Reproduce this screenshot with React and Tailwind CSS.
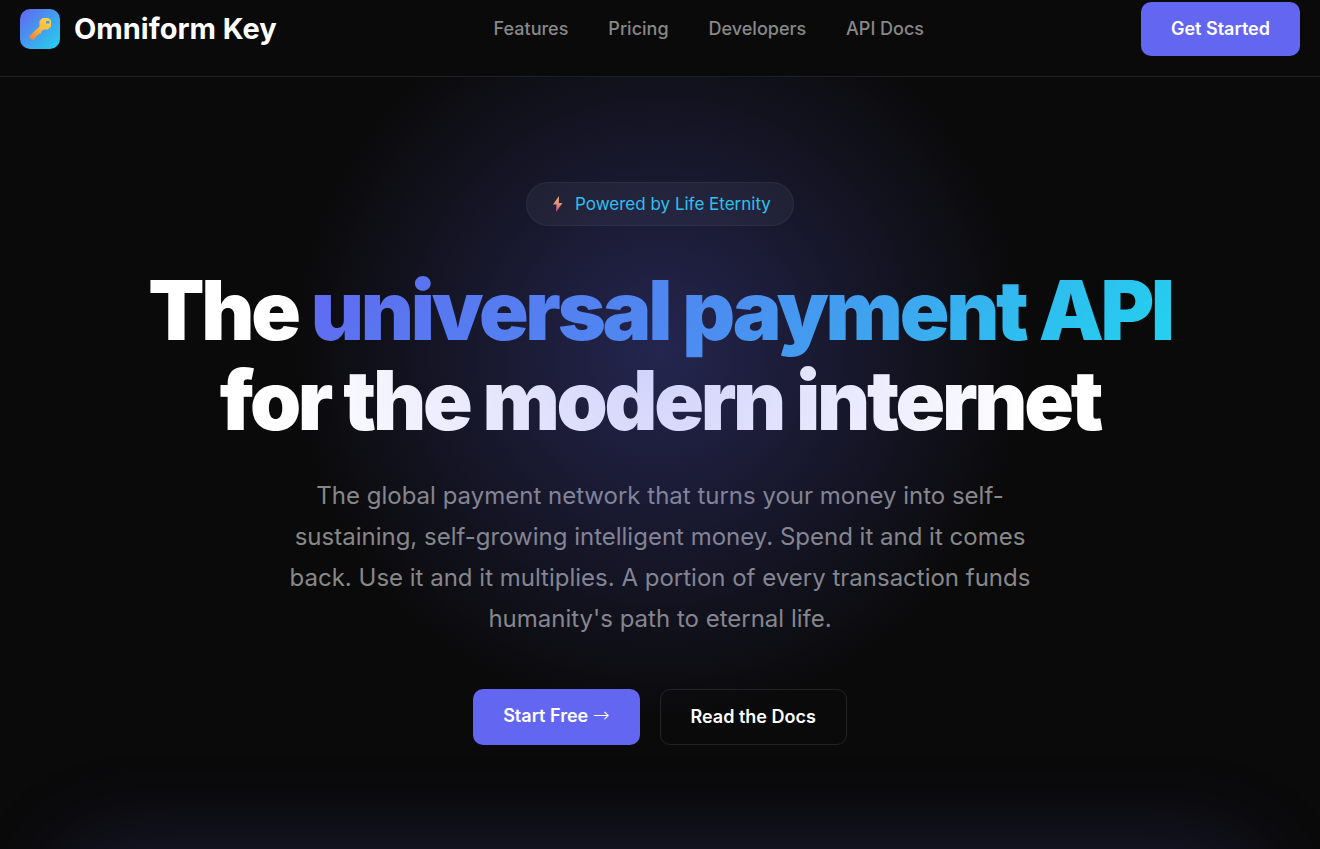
import React from 'react';

const navLinks = [
  { label: 'Features', href: '#features' },
  { label: 'Pricing', href: '#pricing' },
  { label: 'Developers', href: '#developers' },
  { label: 'API Docs', href: '#docs' }
];

const KeyIcon = () => (
  <svg viewBox="0 0 40 40" className="w-10 h-10" aria-hidden="true">
    <defs>
      <linearGradient id="key-gold" x1="31" y1="9" x2="10" y2="31" gradientUnits="userSpaceOnUse">
        <stop offset="0" stopColor="#ffd54a" />
        <stop offset="0.5" stopColor="#fdb941" />
        <stop offset="1" stopColor="#f47b3a" />
      </linearGradient>
    </defs>
    <path
      fill="url(#key-gold)"
      fillRule="evenodd"
      d="M22.500 9h6L31 11.500v6L28 20.500h-4.500L21 23v1.500h-1.500L18 26l-1.500 1L14 30.500h-3L9.500 29v-2L19.500 17.500v-5.500zM26 12v2.500h3.500V12z"
    />
  </svg>
);

const BoltIcon = () => (
  <svg viewBox="0 0 10 16" className="w-2.5 h-4" aria-hidden="true">
    <defs>
      <linearGradient id="bolt-fire" x1="0" y1="0" x2="0" y2="1">
        <stop offset="0" stopColor="#ffc56a" />
        <stop offset="0.5" stopColor="#f79a60" />
        <stop offset="1" stopColor="#e8406a" />
      </linearGradient>
    </defs>
    <path fill="url(#bolt-fire)" d="M6 0 0 8.500h3.500L3 16l6.500-9H5.800z" />
  </svg>
);

const Navbar = () => (
  <header className="relative z-20 flex items-center justify-between px-5 pt-0.5 pb-5 bg-[#0a0a0a] border-b border-[#222222]">
    <a href="#home" className="flex items-center gap-3.5 text-[29px] leading-10 font-bold">
      <span className="rounded-[10px] bg-[linear-gradient(135deg,#6366f1,#22d3ee)]">
        <KeyIcon />
      </span>
      Omniform Key
    </a>
    <nav className="flex gap-10 text-[18px] leading-[22px] font-medium text-[#888888]">
      {navLinks.map((link) => (
        <a key={link.label} href={link.href} className="hover:text-white transition-colors">{link.label}</a>
      ))}
    </nav>
    <button className="px-[30px] py-4 rounded-[10px] bg-[#6366f1] text-[18px] leading-[22px] font-semibold">
      Get Started
    </button>
  </header>
);

const Hero = () => (
  <main className="relative flex flex-col items-center px-5 pt-[105px] text-center">
    <p className="flex items-center gap-3 h-11 px-[22px] pl-[26px] rounded-full bg-white/5 border border-white/5 text-[17px] leading-5 text-[#22d3ee]">
      <BoltIcon />
      Powered by Life Eternity
    </p>
    <h1 className="mt-10 text-[82px] leading-[90px] font-black tracking-[-0.04em]">
      The{' '}
      <span className="bg-[linear-gradient(135deg,#6366f1,#22d3ee)] bg-clip-text text-transparent">universal payment API</span>
      <br />
      for the modern internet
    </h1>
    <p className="mt-[29px] max-w-[760px] text-[24px] leading-[41px] text-[#888888]">
      The global payment network that turns your money into self-sustaining, self-growing intelligent money. Spend it and it comes back. Use it and it multiplies. A portion of every transaction funds humanity's path to eternal life.
    </p>
    <div className="flex gap-5 mt-[50px] text-[18px] leading-[22px] font-semibold">
      <a href="#signup" className="px-[30px] py-4 rounded-[10px] bg-[#6366f1]">
        Start Free <span className="font-['DejaVu_Sans',sans-serif] text-[20px] leading-5 font-extralight">→</span>
      </a>
      <a href="#docs" className="px-[30px] py-4 rounded-[10px] border border-[#222222]">Read the Docs</a>
    </div>
    <div className="pointer-events-none absolute left-1/2 -top-24 -translate-x-1/2 w-[1000px] h-[740px] bg-[radial-gradient(circle_370px_at_center,rgba(99,102,241,0.3),transparent)]" />
  </main>
);

export default function App() {
  return (
    <div className="relative min-h-screen overflow-hidden bg-[#0a0a0a] text-white font-['Inter',sans-serif]">
      <Navbar />
      <Hero />
      <div className="pointer-events-none absolute inset-x-[70px] top-full h-96 shadow-[0_0_90px_rgba(99,102,241,0.2)]" />
    </div>
  );
}
